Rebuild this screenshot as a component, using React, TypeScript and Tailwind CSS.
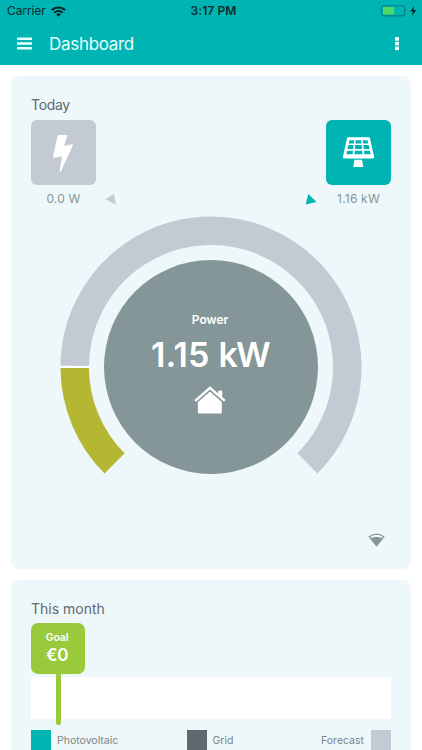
const legend = [
  { id: 'pv', label: 'Photovoltaic', swatch: 'bg-[#00b4b4]', row: 'flex gap-[6px]' },
  { id: 'grid', label: 'Grid', swatch: 'bg-[#616870]', row: 'flex justify-center gap-[6px] pr-[2px]' },
  { id: 'forecast', label: 'Forecast', swatch: 'bg-[#c3cad3]', row: 'flex flex-row-reverse gap-[7px]' },
]

function StatusBar() {
  return (
    <div className="flex h-[22px] items-center text-[12px] leading-none text-[#0b2a2c]">
      <div className="flex flex-1 items-center gap-[5px] pl-[7px]">
        <span className="-tracking-[0.1px]">Carrier</span>
        <svg width="15" height="11" viewBox="0 0 14 10" fill="none" stroke="#061f20" strokeWidth="1.9">
          <path d="M0.8 3.7a9 9 0 0 1 12.4 0" />
          <path d="M3.1 6.2a5.6 5.6 0 0 1 7.8 0" />
          <path d="M7 9.8L4.9 7.7a3 3 0 0 1 4.2 0z" fill="#061f20" stroke="none" />
        </svg>
      </div>
      <span className="pl-[3px] font-semibold tracking-[0.1px]">3:17 PM</span>
      <div className="flex flex-1 items-center justify-end pr-[5px]">
        <svg width="36" height="12" viewBox="0 0 36 12">
          <rect x="0.6" y="0.7" width="23" height="10.2" rx="2.4" fill="none" stroke="#087c7e" strokeWidth="1.1" />
          <rect x="2" y="2.1" width="11" height="7.4" rx="1" fill="#4cd964" />
          <path d="M24.8 4.2q1.2 1.6 0 3.2z" fill="#087c7e" />
          <path d="M33 1L29.4 6.6h2.5L31 11l4.2-6h-2.7z" fill="#061f20" />
        </svg>
      </div>
    </div>
  )
}

function Header() {
  return (
    <header className="h-[65px] bg-[#00b4b4]">
      <StatusBar />
      <div className="flex h-[43px] items-center pr-[22px] pl-[17px] text-[#e6ffff]">
        <svg width="15" height="13" viewBox="0 0 15 13" fill="currentColor">
          <rect y="0.4" width="15" height="2.6" rx="0.5" />
          <rect y="5.2" width="15" height="2.6" rx="0.5" />
          <rect y="10" width="15" height="2.6" rx="0.5" />
        </svg>
        <h1 className="ml-[17px] flex-1 pt-px text-[17px] leading-none tracking-[-0.3px]">Dashboard</h1>
        <svg width="6" height="14" viewBox="0 0 6 14" fill="#ffffff">
          <rect x="1" y="0" width="4" height="3.8" rx="0.9" />
          <rect x="1" y="4.7" width="4" height="3.8" rx="0.9" />
          <rect x="1" y="9.4" width="4" height="3.8" rx="0.9" />
        </svg>
      </div>
    </header>
  )
}

function BoltIcon() {
  return (
    <svg width="65" height="65" viewBox="0 0 65 65" fill="#ffffff">
      <path d="M27.8 15h7.7q1.2 0 .8 1.1L33 25.9l8-1.6q1.4-.2.9 1L30 51.3q-1.3 1.3-1.4-.3L31 36.5l-7.7 1.3q-1.5.2-1.2-1.2L26.5 16q.3-1 1.3-1z" />
    </svg>
  )
}

function SolarIcon() {
  return (
    <svg width="65" height="65" viewBox="0 0 65 65">
      <path d="M22.3 17.3h20.4q1 0 1.2 1l4.2 18.3q.3 1.9-1.6 1.9h-28q-1.9 0-1.6-1.9L21.1 18.3q.2-1 1.2-1z" fill="#ffffff" />
      <g fill="#00b4b4">
        <path d="M23.5 20.2h4.7l-.4 3.3h-5.1z" />
        <path d="M29.7 20.2h5.6l.2 3.3h-6.1z" />
        <path d="M36.8 20.2h4.7l.8 3.3h-5.2z" />
        <path d="M22.3 25.1h5.3l-.4 3.8h-5.7z" />
        <path d="M29.2 25.1h6.5l.2 3.8H29z" />
        <path d="M37.3 25.1h5.4l.8 3.8h-5.8z" />
        <path d="M21.1 30.7H27l-.4 3.5h-6.2z" />
        <path d="M28.7 30.7h7.5l.3 3.5h-8z" />
        <path d="M37.9 30.7h6l.8 3.5h-6.3z" />
      </g>
      <path d="M28.5 39.7h7.5l1.3 7.4H27.2z" fill="#ffffff" />
    </svg>
  )
}

function Gauge() {
  return (
    <div className="mx-auto grid h-[262px] w-[304px]">
      <svg className="col-start-1 row-start-1" width="304" height="262" viewBox="0 0 304 262" fill="none">
        <circle cx="152" cy="154" r="107" fill="#849697" />
        <path d="M15.7 152.8A136.3 136.3 0 1 1 248.4 250.4" stroke="#c3cad3" strokeWidth="28.5" />
        <path d="M15.7 155A136.3 136.3 0 0 0 55.6 250.4" stroke="#b5b733" strokeWidth="28.5" />
        <path d="M1.4 153.9h28.6" stroke="#ffffff" strokeWidth="2" />
      </svg>
      <div className="col-start-1 row-start-1 flex flex-col items-center pt-[99px] pr-[2px] text-white">
        <span className="text-[12px] leading-[16px] font-semibold">Power</span>
        <div className="mt-[6px] flex gap-[9px] text-[34px] leading-[42px] font-semibold">
          <span className="tracking-[0.1px]">1.15</span>
          <span className="tracking-[-1.8px]">kW</span>
        </div>
        <svg className="mt-[10px]" width="32" height="29" viewBox="0 0 32 29" fill="#ffffff">
          <path d="M16 5.6L27.8 16v10.2q0 1.4-1.4 1.4H5.3q-1.4 0-1.4-1.4V16z" />
          <path d="M24.2 5.5q0-.9.9-.9h2.2q.9 0 .9.9v7.8l-4-3.6z" />
          <path d="M0.8 17.2L16 3.8l15.2 13.4" fill="none" stroke="#849697" strokeWidth="1.6" />
          <path d="M1.2 14.9L16 1.9l14.8 13" fill="none" stroke="#ffffff" strokeWidth="2.5" />
        </svg>
      </div>
    </div>
  )
}

function TodayCard() {
  return (
    <section className="h-[493px] rounded-[8px] bg-[#eef8fa] px-5 pt-[19px]">
      <h2 className="text-[14px] leading-[20px] tracking-[-0.3px] text-[#616870]">Today</h2>
      <div className="mt-[5px] flex justify-between">
        <div className="size-[65px] rounded-[6px] bg-[#c3cad3]">
          <BoltIcon />
        </div>
        <div className="size-[65px] rounded-[6px] bg-[#00b4b4]">
          <SolarIcon />
        </div>
      </div>
      <div className="flex h-[28px] items-center justify-between text-[12px] leading-none tracking-[0.2px] text-[#849697]">
        <div className="flex items-center">
          <span className="w-[65px] text-center">0.0 W</span>
          <svg className="ml-[9px]" width="12" height="12" viewBox="0 0 12 12" fill="#c3cad3">
            <path d="M0.3 6.3L8.7 1L11 11.4z" />
          </svg>
        </div>
        <div className="flex items-center">
          <svg className="mr-[9px]" width="12" height="12" viewBox="0 0 12 12" fill="#00b4b4">
            <path d="M3.3 0.9L11.5 8.9L0.7 11.4z" />
          </svg>
          <span className="w-[65px] text-center">1.16 kW</span>
        </div>
      </div>
      <Gauge />
      <div className="mt-[58px] flex justify-end pr-[6px]">
        <svg width="17" height="14" viewBox="0 0 17 14">
          <path d="M1.2 3.7Q8.5-1.5 15.8 3.7L8.5 12.8z" fill="none" stroke="#849697" strokeWidth="1.3" />
          <path d="M2.6 5.3Q8.5 2.6 14.4 5.3L8.5 13z" fill="#849697" />
        </svg>
      </div>
    </section>
  )
}

function MonthCard() {
  return (
    <section className="mt-[11px] h-[200px] rounded-[8px] bg-[#eef8fa] px-5 pt-[19px]">
      <h2 className="text-[14px] leading-[20px] text-[#616870]">This month</h2>
      <div className="relative mt-[58px] h-[42px] bg-white">
        <div className="absolute -top-[54px] left-0 flex w-[54px] flex-col items-center text-white">
          <div className="flex h-[51px] w-full flex-col items-center rounded-[7px] bg-[#98ca3c] pt-[8px] pr-[2px]">
            <span className="text-[10.5px] leading-[14px] font-semibold tracking-[-0.1px]">Goal</span>
            <span className="text-[17px] leading-[20px] font-semibold tracking-[-0.3px]">€0</span>
          </div>
          <div className="-mt-px h-[52px] w-[5px] rounded-b-full bg-[#98ca3c]" />
        </div>
      </div>
      <div className="mt-[11px] grid grid-cols-3 text-[10.5px] text-[#7a8588]">
        {legend.map((item) => (
          <div key={item.id} className={item.row}>
            <span className={`size-5 ${item.swatch}`} />
            <span className="leading-[21px]">{item.label}</span>
          </div>
        ))}
      </div>
    </section>
  )
}

export default function App() {
  return (
    <div className="h-[750px] w-full overflow-hidden bg-white font-['Inter','Liberation_Sans',sans-serif]">
      <Header />
      <main className="px-[11px] pt-[11px]">
        <TodayCard />
        <MonthCard />
      </main>
    </div>
  )
}
